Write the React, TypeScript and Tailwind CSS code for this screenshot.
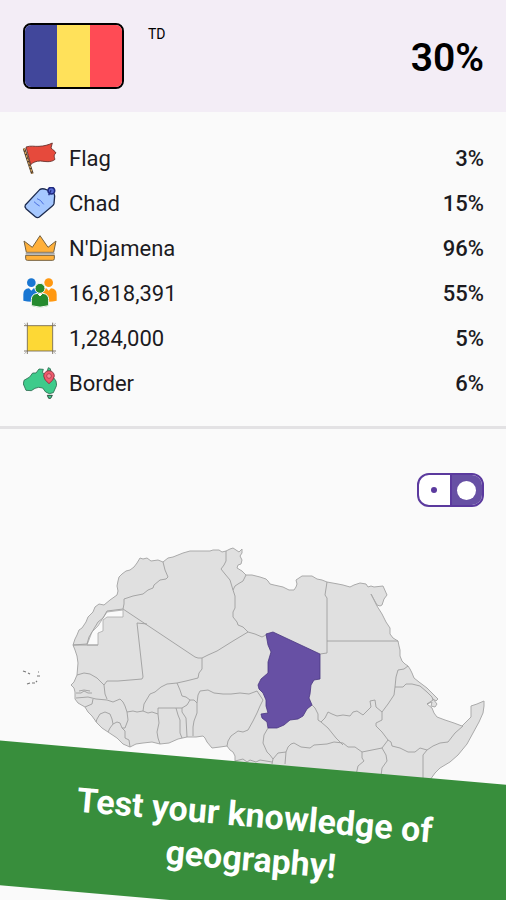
import { useState } from 'react';
import type { ReactNode } from 'react';

const FlagIcon = () => (
  <svg viewBox="0 0 102 102" className="size-[34px]" aria-hidden="true">
    <path d="M3 19 L28 95" stroke="#4a3a2a" strokeWidth="8" />
    <path d="M3 19 L28 95" stroke="#d9a45c" strokeWidth="4" strokeDasharray="7 4" />
    <path
      d="M9 15 C24 10 34 14 48 13 C64 12 76 9 88 3 L84 18 C90 24 97 28 99 33 C92 38 93 44 96 52 C84 63 66 58 52 57 C40 57 30 61 23 68 Z"
      fill="#e64a3c"
      stroke="#5d2a26"
      strokeWidth="2.5"
    />
  </svg>
);

const TagIcon = () => (
  <svg viewBox="0 0 102 102" className="size-[34px]" aria-hidden="true">
    <path
      d="M7 54 L50 8 Q56 4 64 6 L88 15 Q95 19 95 27 L93 50 Q92 54 88 57 L49 90 Q43 94 37 89 L9 65 Q4 59 7 54 Z"
      fill="#a6c8ff"
      stroke="#1d2b4f"
      strokeWidth="4"
    />
    <circle cx="85" cy="11" r="10" fill="#5a6fd6" stroke="#1f2a80" strokeWidth="5" />
    <path d="M84 10 L77 25" stroke="#1f2a80" strokeWidth="4" />
    <path d="M42 35 L52 40 L62 52 M33 44 L42 52 L50 57" fill="none" stroke="#4b6fe0" strokeWidth="3" />
  </svg>
);

const CrownIcon = () => (
  <svg viewBox="0 0 102 102" className="size-[34px]" aria-hidden="true">
    <path
      d="M3 27 L28 46 L51 11 L75 46 L99 27 L92 61 L10 61 Z M8 70 H94 V80 Q94 85 89 85 H13 Q8 85 8 80 Z"
      fill="#ffb03a"
      stroke="#75613f"
      strokeWidth="3"
      strokeLinejoin="round"
    />
    <path d="M8 65 H95" stroke="#a9a9a9" strokeWidth="6" />
  </svg>
);

const PeopleIcon = () => (
  <svg viewBox="0 0 102 102" className="size-[34px]" aria-hidden="true">
    <circle cx="25" cy="17" r="13" fill="#1976d2" />
    <path d="M1 71 V52 Q1 35 18 34 L25 41 L32 34 Q46 36 48 50 V71 Q25 77 1 71 Z" fill="#1976d2" />
    <circle cx="77" cy="17" r="13" fill="#ff9811" />
    <path d="M54 71 V50 Q56 36 70 34 L77 41 L84 34 Q101 35 101 52 V71 Q77 77 54 71 Z" fill="#ff9811" />
    <g fill="#258a2e" stroke="#fafafa" strokeWidth="3">
      <path d="M25 86 V68 Q25 51 43 49 L51 57 L59 49 Q77 51 77 68 V86 Q51 95 25 86 Z" />
      <circle cx="51" cy="34" r="15" />
    </g>
  </svg>
);

const AreaIcon = () => (
  <svg viewBox="0 0 102 102" className="size-[34px]" aria-hidden="true">
    <rect x="13" y="11" width="76" height="76" fill="#fdd835" />
    <path d="M13 2 V96 M89 2 V96 M3 11 H99 M3 87 H99" stroke="#6b6250" strokeWidth="2.5" />
    <path d="M4 4 l6 5 M98 4 l-6 5 M4 95 l6 -5 M98 95 l-6 -5" stroke="#8e8e8e" strokeWidth="2" />
  </svg>
);

const BorderIcon = () => (
  <svg viewBox="0 0 102 102" className="size-[34px]" aria-hidden="true">
    <path
      d="M1 51 L3 40 L20 30 L29 18 L39 18 L48 6 L61 7 L58 17 L69 23 L76 2 L82 5 L86 24 L99 42 L101 55 L91 77 L79 80 L68 75 L59 63 L47 61 L36 64 L25 71 L9 70 Z"
      fill="#3ecb8b"
      stroke="#2c6b4f"
      strokeWidth="2.5"
      strokeLinejoin="round"
    />
    <path d="M73 85 L88 85 L83 94 L77 94 Z" fill="#3ecb8b" stroke="#2c4f40" strokeWidth="3" />
    <path d="M62 27 A16 16 0 1 1 94 27 Q93 39 78 50 Q63 39 62 27 Z" fill="#ef5b6c" stroke="#7c2f3c" strokeWidth="2.5" />
    <circle cx="78" cy="27" r="7" fill="#f58b98" stroke="#a83a4a" strokeWidth="2.5" />
  </svg>
);

const facts: { icon: ReactNode; label: string; score: number }[] = [
  { icon: <FlagIcon />, label: 'Flag', score: 3 },
  { icon: <TagIcon />, label: 'Chad', score: 15 },
  { icon: <CrownIcon />, label: "N'Djamena", score: 96 },
  { icon: <PeopleIcon />, label: '16,818,391', score: 55 },
  { icon: <AreaIcon />, label: '1,284,000', score: 5 },
  { icon: <BorderIcon />, label: 'Border', score: 6 },
];

// Coastline of the northern half of the continent
const coast =
  'M73 645 L75 639 77 635 79 630 82 628 86 622 88 617 93 612 95 607 99 604 104 605 110 600 117 595 118 591 117 586 118 581 119 577 122 574 126 571 130 570 134 567 137 563 140 558 143 559 147 558 151 561 158 560 163 562 168 558 173 557 178 555 183 553 190 551 200 551 210 551 213 550 219 550 222 552 226 551 230 549 233 548 236 550 239 552 242 549 242 553 240 556 242 560 241 564 238 565 237 568 242 571 246 575 252 575 260 577 266 579 268 581 270 584 274 585 283 587 289 590 294 590 296 587 297 584 296 580 299 578 302 576 312 576 317 579 322 580 327 582 338 584 343 585 350 587 354 585 360 583 366 584 368 587 371 586 374 587 383 586 387 595 384 599 382 605 380 606 377 605 371 594 377 606 382 614 386 622 390 628 390 634 393 638 398 641 399 646 400 650 400 656 402 661 405 664 408 666 410 669 412 673 414 678 419 682 427 688 433 694 438 699 436 701 433 699 437 704 435 707 431 706 432 702 427 704 432 708 434 713 437 717 445 720 454 723 462 726 466 722 471 717 471 706 477 704 484 701 484 706 483 713 479 722 473 733 467 744 458 755 450 762 440 768 435 773 430 780 V810 H236 L235 760 235 756 233 752 230 750 227 746 220 747 212 748 207 742 205 738 203 736 196 737 187 737 178 739 169 743 160 744 152 742 143 743 136 744 130 747 123 744 117 738 108 732 102 728 97 723 92 716 88 712 85 707 78 703 75 699 75 692 74 688 71 685 74 682 77 675 78 663 77 656 75 650 Z';

const borders = [
  // Maghreb and Sahara
  'M163 562 L165 570 168 577 166 579 160 580 154 585 153 588 148 590 143 594 133 596 124 599 124 604 123 609 107 611 103 618 98 622 92 632 89 637 87 644 73 645',
  'M73 645 H98',
  'M123 609 L195 657 198 658 202 658 208 655 217 651 225 646 233 641 248 632',
  'M226 551 L226 561 224 565 221 569 225 574 230 580 233 590 235 596 235 608 233 612 233 617 237 622 238 625 243 627 248 632 255 634 262 637 266 635',
  'M246 575 L243 581 238 584 235 586 233 590',
  'M327 582 L325 595 327 598 327 653 320 654',
  'M327 641 H398',
  // Mauritania and Mali
  'M147 624 L137 623 140 650 143 677 142 679 118 681 107 681 104 685 97 678 90 674 84 673 77 675',
  'M104 685 L105 694 107 699',
  // West African coast states
  'M76 698 L88 697 96 699 107 700 113 702 120 699 123 702 125 706 127 712 128 720 125 728 122 728 120 723 117 722 113 724 112 719 110 714 105 712 100 714 97 719 96 722',
  'M93 699 L92 704 85 707',
  'M76 693 L81 693 84 691 88 693 92 693 M79 691 L84 690 90 691',
  'M113 724 L110 728 108 732',
  'M122 728 L125 731 125 738 129 740 130 747',
  'M127 712 L133 711 137 712 143 711 148 713 152 712 158 714',
  'M143 711 L144 704 147 699 150 694 155 692 161 687 167 684 177 683 186 681 198 678 199 673 202 669 202 658',
  'M177 683 L180 690 182 696 186 697 190 700 187 705 182 708 158 708 158 714 159 723 157 732 158 738 160 744',
  'M176 708 L178 715 180 720 180 733 182 738',
  'M182 708 L182 712 186 718 187 737',
  'M190 700 L194 700 197 703 197 713 194 721 193 727 193 736',
  'M197 703 L198 695 200 691 208 690 214 693 223 694 231 694 240 693 249 694 257 691 263 700',
  // Central Africa
  'M263 700 L260 706 257 713 253 721 248 730 243 732 238 731 231 736 228 741 227 746',
  'M235 761 L243 759 247 762 250 760 256 762 260 760 272 762',
  'M268 728 L264 735 263 743 267 752 270 755 273 759 272 764',
  'M285 764 L286 752 278 753 273 759',
  'M286 752 L288 747 291 744 294 743 301 747 310 748 314 745 327 744 334 742 343 743 348 747 355 747 362 752 372 750 382 748 388 740',
  'M321 722 L328 728 336 738 343 745',
  'M312 705 L315 708 318 714 318 720 321 722 325 718 328 712 332 714 337 716 343 715 350 716 353 712 357 711 363 715 367 711 371 707 370 701 375 700 376 707 382 712',
  'M362 752 L362 758 364 761 358 766 356 775',
  'M382 748 L386 755 387 761 382 768 381 776',
  // Horn of Africa
  'M408 666 L404 669 398 670 396 677 395 687 394 695 388 704 382 712 382 720 376 723 376 726 382 732 388 740 391 742 392 746 400 748 408 752 415 752 420 748 427 750 433 746 440 743 448 742 455 733 463 726',
  'M395 687 L403 687 406 684 412 684 420 686 427 692 432 697 433 700 427 704',
  'M427 750 L423 755 V780',
];

const chad =
  'M266 634 L273 632 320 654 320 679 314 680 311 685 310 694 309 698 312 705 307 709 303 716 298 719 290 720 284 725 277 728 268 728 267 722 262 718 261 714 268 713 266 706 266 700 263 693 259 689 258 685 261 679 268 673 268 662 271 652 268 645 Z';

const AfricaMap = () => (
  <svg viewBox="0 540 506 270" className="w-full" role="img" aria-label="Map of Africa with Chad highlighted">
    <path d={coast} fill="#e0e0e0" stroke="#aaaaaa" strokeWidth="1" strokeLinejoin="round" />
    <path d="M107 612 L123 610 V617 H107 L103 620 V631 L98 633 V645 H87 L92 632 98 626 103 618 Z" fill="#fafafa" stroke="#aaaaaa" strokeWidth="0.8" />
    {borders.map((d) => (
      <path key={d} d={d} fill="none" stroke="#9e9e9e" strokeWidth="0.9" strokeLinejoin="round" />
    ))}
    <path d={chad} fill="#6750a4" stroke="#4a3780" strokeWidth="0.8" />
    {/* Cape Verde */}
    <path d="M23 671 l3 1 M28 673 l2 1 M38 672 h1 M37 676 h3 M27 684 l3 -1 M32 683 l3 0 M36 681 l1 1" stroke="#777777" strokeWidth="1.2" />
  </svg>
);

const App = () => {
  const [shapeView, setShapeView] = useState(true);

  return (
    <div className="relative flex min-h-screen flex-col overflow-hidden bg-[#fafafa] font-['Roboto',sans-serif] text-[#1c1b1f]">
      {/* Header */}
      <header className="flex h-28 items-center bg-[#f3edf6] pr-[22px] pl-[23px] text-black">
        <div className="flex h-[66px] w-[101px] overflow-hidden rounded-lg border-2 border-black">
          <span className="flex-1 bg-[#41479b]" />
          <span className="flex-1 bg-[#ffe15a]" />
          <span className="flex-1 bg-[#ff4b55]" />
        </div>
        <span className="ml-6 self-start pt-6 text-sm">TD</span>
        <h1 className="ml-auto pt-1 text-[39px] font-semibold">30%</h1>
      </header>

      {/* Scores */}
      <ul className="border-b-3 border-[#e3e2e4] pt-6 pr-[22px] pb-5 pl-[23px] text-[22px]">
        {facts.map((fact) => (
          <li key={fact.label} className="flex h-[45px] items-center gap-3">
            {fact.icon}
            <span>{fact.label}</span>
            <span className="ml-auto font-medium">{fact.score}%</span>
          </li>
        ))}
      </ul>

      {/* Map */}
      <div className="flex justify-end pt-11 pr-[22px] pb-[33px]">
        <label className="flex h-[34px] w-[67px] cursor-pointer overflow-hidden rounded-xl border-2 border-[#5b3a9e] bg-white">
          <input
            type="checkbox"
            role="switch"
            aria-label="Show country shape"
            className="sr-only"
            checked={shapeView}
            onChange={(e) => setShapeView(e.target.checked)}
          />
          <span className="flex flex-1 items-center justify-center border-r-2 border-[#5b3a9e]">
            <span className="size-1.5 rounded-full bg-[#5b3a9e]" />
          </span>
          <span className="flex flex-1 items-center justify-center bg-[#6750a4]">
            <span className="size-[19px] rounded-full bg-white" />
          </span>
        </label>
      </div>
      <AfricaMap />

      {/* Slanted banner over the lower edge */}
      <div className="absolute -inset-x-4 -bottom-[7px] flex h-36 rotate-5 items-center justify-center bg-[#388e3c] px-16 pt-1 text-center text-[34px] leading-11 font-bold text-white">
        <p>
          Test your knowledge of
          <br />
          geography!
        </p>
      </div>
    </div>
  );
};

export default App;
